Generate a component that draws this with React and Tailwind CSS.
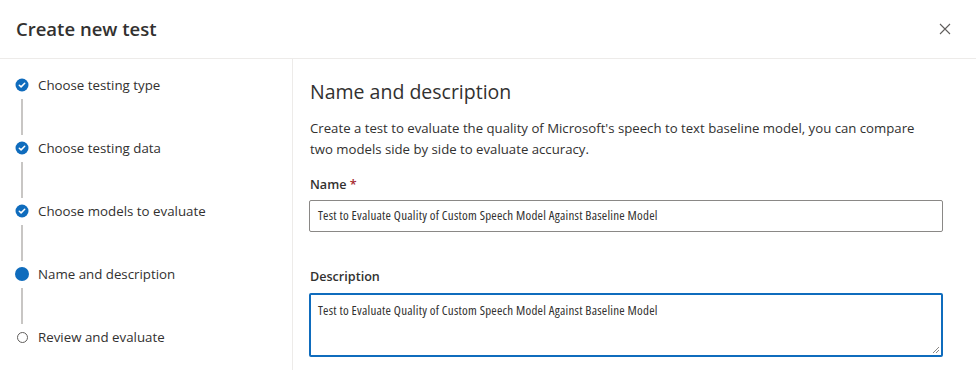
import React from 'react';

const steps = [
  { label: 'Choose testing type', state: 'done' },
  { label: 'Choose testing data', state: 'done' },
  { label: 'Choose models to evaluate', state: 'done' },
  { label: 'Name and description', state: 'current' },
  { label: 'Review and evaluate', state: 'todo' },
];

function StepIcon({ state }) {
  if (state === 'done') {
    return (
      <svg width="14" height="14" viewBox="0 0 14 14">
        <circle cx="7" cy="7" r="6.5" fill="#0f6cbd" />
        <path d="M4.3 7.2 L6.1 8.9 L9.7 5.3" fill="none" stroke="#fff" strokeWidth="1.5" strokeLinecap="round" strokeLinejoin="round" />
      </svg>
    );
  }
  if (state === 'current') {
    return <div className="w-[14px] h-[14px] rounded-full bg-[#0f6cbd]" />;
  }
  return <div className="w-[11px] h-[11px] rounded-full border border-[#605e5c] bg-white" />;
}

export default function App() {
  return (
    <div className="w-[976px] h-[370px] bg-white overflow-hidden text-[#323130] font-['Open_Sans',sans-serif]">
      <div className="h-[59px] border-b border-[#edebe9] flex items-center justify-between pl-4 pr-[25px]">
        <h1 className="text-[18.5px] font-semibold leading-7 pb-[1px]">Create new test</h1>
        <svg width="12" height="12" viewBox="0 0 12 12" className="mb-[1px]">
          <path d="M1 1 L11 11 M11 1 L1 11" stroke="#605e5c" strokeWidth="1.1" />
        </svg>
      </div>
      <div className="flex h-[311px]">
        <div className="w-[293px] border-r border-[#edebe9] pl-[15px] pt-[16px] shrink-0">
          {steps.map((s, i) => (
            <div key={s.label}>
              <div className="flex items-center h-5">
                <div className="w-[14px] flex justify-center">
                  <StepIcon state={s.state} />
                </div>
                <span className="ml-[9px] text-[13.3px] leading-5">{s.label}</span>
              </div>
              {i < steps.length - 1 && (
                <div className="h-[43px] w-[14px] flex justify-center pt-1 pb-[3px]">
                  <div className="w-[2px] h-full bg-[#c8c6c4]" />
                </div>
              )}
            </div>
          ))}
        </div>
        <div className="pl-[16px] pt-[19px]">
          <h2 className="text-[19.5px] leading-7 ml-[1px]">Name and description</h2>
          <p className="mt-3 text-[13.2px] leading-[21px] ml-[1px] w-[640px] text-[#323130]">
            Create a test to evaluate the quality of Microsoft's speech to text baseline model, you can compare<br />
            two models side by side to evaluate accuracy.
          </p>
          <div className="mt-[15px] text-[12.6px] leading-5 font-semibold ml-[1px]">
            Name <span className="text-[#a4262c]">*</span>
          </div>
          <div className="mt-[5px] w-[634px] h-[32px] border border-[#8a8886] rounded-[2px] flex items-center px-2 text-[13px] font-stretch-condensed tracking-[0.23px]">
            Test to Evaluate Quality of Custom Speech Model Against Baseline Model
          </div>
          <div className="mt-[35px] text-[12.6px] leading-5 font-semibold ml-[1px]">Description</div>
          <div className="mt-[6px] relative w-[634px] h-[64px] border-2 border-[#0f6cbd] rounded-[2px] px-[7px] pt-[5px] text-[13px] leading-5 font-stretch-condensed tracking-[0.23px]">
            Test to Evaluate Quality of Custom Speech Model Against Baseline Model
            <svg width="8" height="8" viewBox="0 0 8 8" className="absolute right-[1px] bottom-[1px]">
              <path d="M7 1 L1 7 M7 4 L4 7" stroke="#8a8886" strokeWidth="1" />
            </svg>
          </div>
        </div>
      </div>
    </div>
  );
}
